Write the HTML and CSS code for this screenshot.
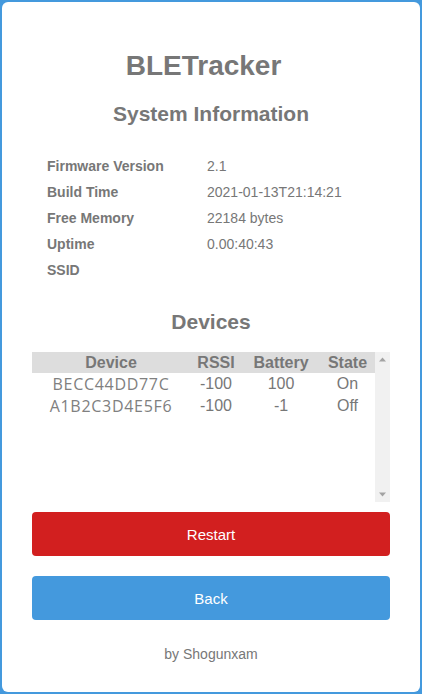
FILE: index.html
```html
<!DOCTYPE html>
<html lang="en">
<head>
<meta charset="utf-8">
<title>BLETracker</title>
<link rel="stylesheet" href="styles.css">
</head>
<body>
<div class="page">
  <main class="card">
    <h1 class="title">BLETracker</h1>
    <h2 class="section">System Information</h2>
    <dl class="info">
      <dt>Firmware Version</dt><dd>2.1</dd>
      <dt>Build Time</dt><dd>2021-01-13T21:14:21</dd>
      <dt>Free Memory</dt><dd>22184 bytes</dd>
      <dt>Uptime</dt><dd>0.00:40:43</dd>
      <dt>SSID</dt><dd></dd>
    </dl>
    <h2 class="section devices-title">Devices</h2>
    <div class="devices">
      <div class="dev-scroll">
        <table class="dev-table">
          <colgroup>
            <col class="c-dev"><col class="c-rssi"><col class="c-bat"><col class="c-state">
          </colgroup>
          <thead>
            <tr><th>Device</th><th>RSSI</th><th>Battery</th><th>State</th></tr>
          </thead>
          <tbody>
            <tr><td class="mac">BECC44DD77C</td><td>-100</td><td>100</td><td>On</td></tr>
            <tr><td class="mac">A1B2C3D4E5F6</td><td>-100</td><td>-1</td><td>Off</td></tr>
          </tbody>
        </table>
      </div>
      <div class="scrollbar" aria-hidden="true">
        <svg class="arrow" width="15" height="15" viewBox="0 0 15 15"><path d="M4 9.5 L7.5 5.5 L11 9.5 Z" fill="#a3a3a3"/></svg>
        <svg class="arrow" width="15" height="15" viewBox="0 0 15 15"><path d="M4 5.5 L11 5.5 L7.5 9.5 Z" fill="#a3a3a3"/></svg>
      </div>
    </div>
    <button class="btn btn-red" type="button">Restart</button>
    <button class="btn btn-blue" type="button">Back</button>
    <footer class="footer">by Shogunxam</footer>
  </main>
</div>
</body>
</html>
```

FILE: styles.css
```css
* { box-sizing: border-box; }
html, body { margin: 0; padding: 0; }
body {
  font-family: "Liberation Sans", Arial, sans-serif;
  color: #777;
  background: #4499dd;
}
.page {
  height: 694px;
  padding: 2px;
  background: #4499dd;
}
.card {
  height: 690px;
  background: #fff;
  border-radius: 6px;
  padding: 48px 30px 0 30px;
  display: flex;
  flex-direction: column;
}
.title {
  margin: 0;
  padding-right: 15px;
  font-size: 28px;
  line-height: 32px;
  font-weight: bold;
  text-align: center;
}
.section {
  margin: 20px 0 0 0;
  font-size: 21px;
  line-height: 24px;
  font-weight: bold;
  text-align: center;
}
.info {
  margin: 27px 0 0 15px;
  display: grid;
  grid-template-columns: 160px auto;
  grid-auto-rows: 26px;
  font-size: 14px;
  align-items: center;
}
.info dt { font-weight: bold; margin: 0; }
.info dd { margin: 0; }
.devices-title { margin-top: 27px; }
.devices {
  margin-top: 18px;
  height: 150px;
  display: flex;
}
.dev-scroll {
  flex: 1;
  overflow: hidden;
}
.scrollbar {
  width: 15px;
  flex: none;
  background: #f1f1f1;
  display: flex;
  flex-direction: column;
  justify-content: space-between;
}
.arrow { display: block; }
.dev-table {
  width: 100%;
  border-collapse: collapse;
  table-layout: fixed;
  font-size: 16px;
}
.c-dev { width: 158px; }
.c-rssi { width: 52px; }
.c-bat { width: 78px; }
.c-state { width: 55px; }
.dev-table th {
  background: #ddd;
  font-weight: bold;
  height: 21px;
  padding: 0;
  text-align: center;
}
.dev-table td {
  height: 22px;
  padding: 0;
  text-align: center;
}
.dev-table .mac {
  font-family: "Open Sans", sans-serif;
  letter-spacing: 0.7px;
  color: #808080;
}
.btn {
  display: block;
  width: 100%;
  height: 44px;
  border: 0;
  border-radius: 4px;
  color: #fff;
  font-family: "Liberation Sans", Arial, sans-serif;
  font-size: 15px;
  padding: 0;
}
.btn-red { background: #d21f1f; margin-top: 10px; }
.btn-blue { background: #4499dd; margin-top: 20px; }
.footer {
  margin-top: 26px;
  font-size: 14px;
  line-height: 16px;
  text-align: center;
}
```
